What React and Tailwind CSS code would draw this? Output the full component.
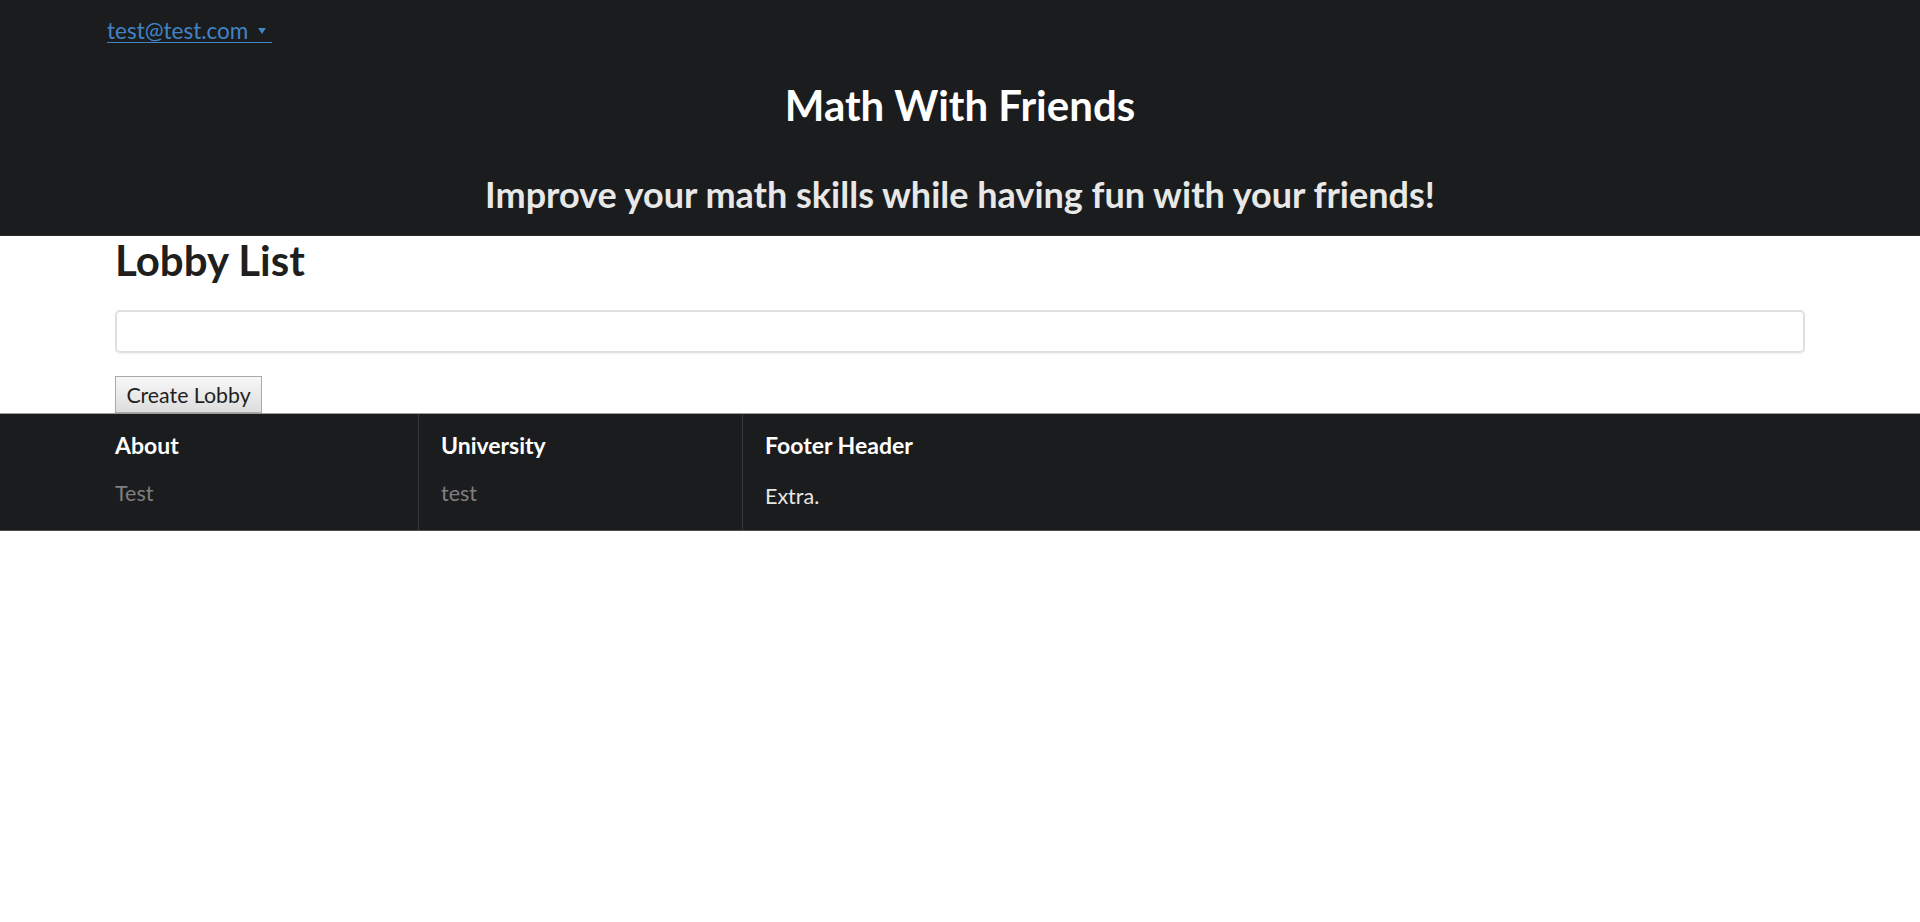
import React from 'react';

const footerCols = [
    { title: 'About', body: 'Test', muted: true },
    { title: 'University', body: 'test', muted: true },
    { title: 'Footer Header', body: 'Extra.', muted: false },
];

export default function App() {
    return (
        <div className="min-h-screen bg-white font-['Lato','Liberation_Sans',sans-serif]">
            {/* Masthead */}
            <header className="h-[236px] bg-[#1b1c1d] border-b border-[#2c2d2e]">
                <div className="px-[107px] pt-[20px]">
                    <a href="#" className="inline-flex items-center border-b border-[#4183c4] text-[22.5px] leading-[22px] text-[#4183c4]">
                        test@test.com
                        <svg className="ml-[10px] mr-[6px]" width="8" height="6" viewBox="0 0 8 6">
                            <path d="M0 0h8L4 6z" fill="#4183c4" />
                        </svg>
                    </a>
                </div>
                <h1 className="mt-[35px] text-center text-[42px] leading-[50px] font-bold text-white">
                    Math With Friends
                </h1>
                <h2 className="mt-[42px] text-center text-[36px] leading-[44px] font-bold text-[#e8e8e8]">
                    Improve your math skills while having fun with your friends!
                </h2>
            </header>

            {/* Lobby list */}
            <main className="mx-[115px]">
                <h2 className="text-[42px] leading-[48px] font-bold text-[#1f1f20]">Lobby List</h2>
                <input
                    type="text"
                    className="mt-[26px] block w-full h-[43px] rounded-[5px] border-2 border-[#e0e0e0] px-3 text-[21px] outline-none shadow-[0_1px_2px_rgba(0,0,0,0.06)]"
                />
                <button className="mt-[23px] block h-[37px] w-[147px] border border-[#a9a9a9] bg-gradient-to-b from-[#f8f8f8] to-[#dddddd] text-[21.3px] leading-[26px] text-[#1f1f20]">
                    Create Lobby
                </button>
            </main>

            {/* Footer */}
            <footer className="h-[118px] bg-[#1b1c1d] border-t border-b border-t-[#9c9c9c] border-b-[#505050]">
                <div className="mx-[93px] grid grid-cols-[325px_324px_1fr] h-full">
                    {footerCols.map((col, i) => (
                        <div
                            key={col.title}
                            className={`px-[22px] pt-[17px] ${i > 0 ? 'border-l border-[#363738]' : ''}`}
                        >
                            <h4 className="text-[23px] leading-[28px] font-bold text-white">{col.title}</h4>
                            <p className={`text-[21.5px] leading-[26px] ${col.muted ? 'mt-[21px] text-[#7f7f80]' : 'mt-[24px] text-[#e6e6e6]'}`}>
                                {col.body}
                            </p>
                        </div>
                    ))}
                </div>
            </footer>
        </div>
    );
}
